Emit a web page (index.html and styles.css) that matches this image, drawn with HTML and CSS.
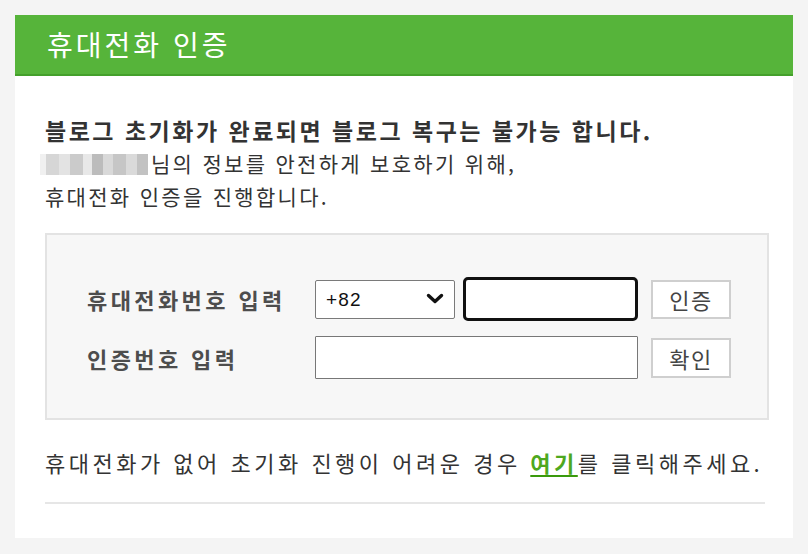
FILE: index.html
```html
<!DOCTYPE html>
<html lang="ko">
<head>
    <meta charset="UTF-8">
    <meta name="viewport" content="width=device-width, initial-scale=1.0">
    <title>휴대전화 인증</title>
    <link rel="stylesheet" href="styles.css">
</head>
<body>
    <div class="card">
        <h2 class="card-header">휴대전화 인증</h2>

        <div class="card-body">
            <div class="intro">
                <p class="intro-title">블로그 초기화가 완료되면 블로그 복구는 불가능 합니다.</p>
                <p class="intro-text"><span class="masked"></span>님의 정보를 안전하게 보호하기 위해,</p>
                <p class="intro-text">휴대전화 인증을 진행합니다.</p>
            </div>

            <form class="verify-box" id="verifyForm">
                <div class="row">
                    <label class="row-label" for="phone">휴대전화번호 입력</label>
                    <span class="select-wrap">
                        <select id="country" name="country">
                            <option>+82</option>
                        </select>
                        <svg class="chevron" width="18" height="11" viewBox="0 0 18 11">
                            <path d="M2.5 2.5 L9 8.5 L15.5 2.5" fill="none" stroke="#111" stroke-width="3.4" stroke-linecap="round" stroke-linejoin="round"/>
                        </svg>
                    </span>
                    <input type="tel" id="phone" name="phone" class="phone-input" />
                    <button type="button">인증</button>
                </div>

                <div class="row">
                    <label class="row-label" for="code">인증번호 입력</label>
                    <input type="text" id="code" name="code" class="code-input" />
                    <button type="button">확인</button>
                </div>
            </form>

            <p class="notice">휴대전화가 없어 초기화 진행이 어려운 경우 <a href="#">여기</a>를 클릭해주세요.</p>
            <div class="divider"></div>
        </div>
    </div>
</body>
</html>
```

FILE: styles.css
```css
body {
    font-family: "Noto Sans CJK KR", sans-serif;
    background-color: #f4f4f4;
    margin: 0;
    padding: 15px;
    color: #333;
}

.card {
    background-color: #fff;
    width: 778px;
    height: 523px;
    box-sizing: border-box;
}

.card-header {
    margin: 0;
    height: 59px;
    line-height: 58px;
    padding-left: 32px;
    background-color: #56b43a;
    border-bottom: 2px solid #44a02b;
    color: #fff;
    font-size: 28px;
    font-weight: normal;
    letter-spacing: 3px;
}

.card-body {
    padding: 37px 24px 0 30px;
}

.intro p {
    margin: 0;
}

.intro-title {
    font-size: 23px;
    font-weight: bold;
    line-height: 34px;
    letter-spacing: 2.5px;
}

.intro-text {
    font-size: 21px;
    line-height: 33px;
    letter-spacing: 2.3px;
}

.masked {
    display: inline-block;
    width: 108px;
    height: 21px;
    margin-left: -5px;
    margin-right: 3px;
    vertical-align: -3px;
    background: linear-gradient(90deg, #f0f0f0 0 6%, #d6d6d6 6% 18%, #e3e3e3 18% 28%, #cbcbcb 28% 40%, #e8e8e8 40% 48%, #bcbcbc 48% 58%, #d9d9d9 58% 68%, #c6c6c6 68% 80%, #dadada 80% 90%, #c2c2c2 90%);
}

.verify-box {
    margin-top: 20px;
    padding: 42px 0 39px 40px;
    background-color: #f7f7f7;
    border: 2px solid #e3e3e3;
}

.row {
    display: flex;
    align-items: center;
}

.row + .row {
    margin-top: 15px;
}

.row-label {
    width: 228px;
    font-size: 22px;
    font-weight: bold;
    letter-spacing: 3.4px;
    color: #4d4d4d;
}

.select-wrap {
    position: relative;
    width: 140px;
    height: 39px;
    margin-right: 8px;
}

.select-wrap select {
    appearance: none;
    width: 100%;
    height: 100%;
    margin: 0;
    padding: 0 0 0 10px;
    border: 1px solid #7a7a7a;
    border-radius: 2px;
    background-color: #fff;
    font-family: "Liberation Sans", Arial, sans-serif;
    font-size: 19px;
    letter-spacing: 1.2px;
    color: #111;
}

.chevron {
    position: absolute;
    right: 11px;
    top: 13px;
    pointer-events: none;
}

input[type="tel"],
input[type="text"] {
    box-sizing: border-box;
    margin: 0 13px 0 0;
    background-color: #fff;
    font-size: 18px;
}

.phone-input {
    width: 175px;
    height: 44px;
    border: 3px solid #111;
    border-radius: 5px;
}

.code-input {
    width: 323px;
    height: 43px;
    border: 1px solid #777;
    border-radius: 1px;
}

button {
    box-sizing: border-box;
    width: 80px;
    height: 39px;
    padding: 0;
    border: 2px solid #cfcfcf;
    background-color: #fff;
    font-family: "Noto Sans CJK KR", sans-serif;
    font-size: 22px;
    letter-spacing: 1.5px;
    color: #444;
    cursor: pointer;
}

.code-input + button {
    height: 40px;
}

.notice {
    margin: 27px 0 0;
    font-size: 22px;
    line-height: 30px;
    letter-spacing: 3.5px;
}

.notice a {
    color: #4ea81e;
    font-weight: bold;
    text-decoration: underline;
    text-decoration-color: #3a9a0c;
    text-decoration-thickness: 2px;
    text-underline-offset: 3px;
}

.divider {
    margin-top: 25px;
    width: 720px;
    height: 2px;
    background-color: #e6e6e6;
}
```
